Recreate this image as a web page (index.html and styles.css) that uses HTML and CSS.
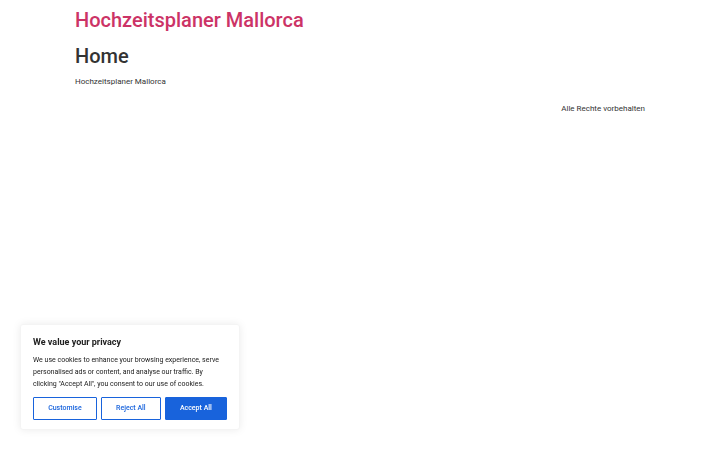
FILE: index.html
```html
<!DOCTYPE html>
<html lang="de">
<head>
<meta charset="utf-8">
<title>Home – Hochzeitsplaner Mallorca</title>
<link rel="stylesheet" href="styles.css">
</head>
<body>
<header class="site-header">
  <p class="site-title"><a href="#">Hochzeitsplaner Mallorca</a></p>
</header>
<main class="site-main">
  <h1 class="entry-title">Home</h1>
  <p class="page-text">Hochzeitsplaner Mallorca</p>
</main>
<footer class="site-footer">
  <p class="copyright">Alle Rechte vorbehalten</p>
</footer>

<div class="cky-consent">
  <p class="cky-title">We value your privacy</p>
  <p class="cky-desc">We use cookies to enhance your browsing experience, serve personalised ads or content, and analyse our traffic. By clicking "Accept All", you consent to our use of cookies.</p>
  <div class="cky-btns">
    <button class="cky-btn cky-outline">Customise</button>
    <button class="cky-btn cky-outline">Reject All</button>
    <button class="cky-btn cky-accept">Accept All</button>
  </div>
</div>
</body>
</html>
```
FILE: styles.css
```css
html, body {
  margin: 0;
  padding: 0;
  background: #fff;
}
body {
  font-family: Roboto, "Liberation Sans", Arial, sans-serif;
  font-size: 8px;
  line-height: 1.5;
  color: #333;
}
.site-header,
.site-main,
.site-footer {
  width: 570px;
  margin: 0 auto;
}
.site-header {
  padding: 8px 0;
}
.site-title {
  margin: 0;
  font-size: 20px;
  line-height: 1.2;
  font-weight: 500;
}
.site-title a {
  color: #c36;
  text-decoration: none;
}
.entry-title {
  margin: 4px 0 8px;
  font-size: 20px;
  line-height: 1.2;
  font-weight: 500;
  color: #333;
}
.page-text {
  margin: 0;
}
.site-footer {
  padding: 15px 0 8px;
  display: flex;
  justify-content: flex-end;
}
.copyright {
  margin: 0;
}

.cky-consent {
  position: fixed;
  left: 20px;
  bottom: 20px;
  width: 220px;
  box-sizing: border-box;
  padding: 12px 12px 9px;
  background: #fff;
  border: 0.5px solid #f4f4f4;
  border-radius: 3px;
  box-shadow: 0 0 9px rgba(0, 0, 0, 0.08);
  color: #212121;
}
.cky-title {
  margin: 0 0 6px;
  font-size: 9px;
  line-height: 1.2;
  font-weight: 700;
  color: #212121;
}
.cky-desc {
  margin: 0;
  font-size: 7px;
  line-height: 12px;
  color: #212121;
}
.cky-btns {
  display: flex;
  gap: 4px;
  margin-top: 7px;
}
.cky-btn {
  flex: auto;
  font-family: inherit;
  font-size: 7px;
  font-weight: 500;
  line-height: 12px;
  padding: 4px 12px 5px;
  border: 1px solid #1863dc;
  border-radius: 1px;
  cursor: pointer;
}
.cky-outline {
  background: transparent;
  color: #1863dc;
}
.cky-accept {
  background: #1863dc;
  color: #fff;
}
```
